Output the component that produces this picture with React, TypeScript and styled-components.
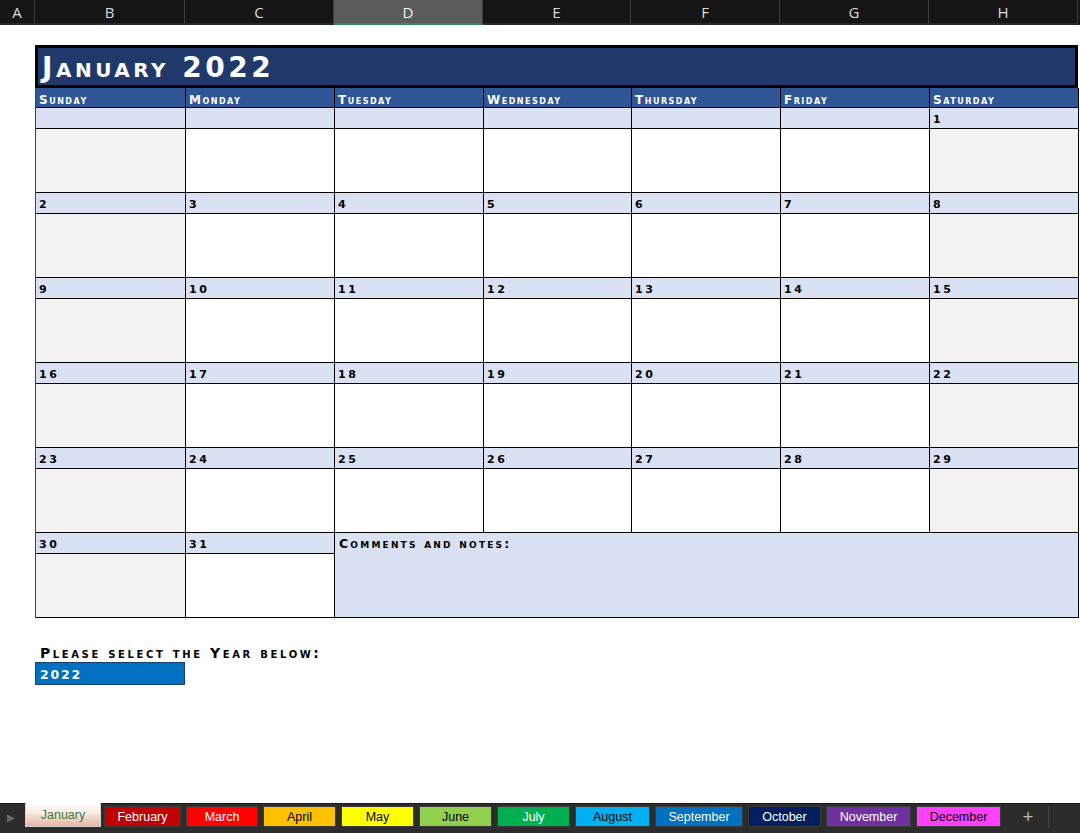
import React from "react";
import styled, { createGlobalStyle } from "styled-components";

const GlobalStyle = createGlobalStyle`
  html, body {
    margin: 0;
    padding: 0;
    background: #ffffff;
    font-family: "Liberation Sans", Arial, sans-serif;
  }
`;

const Page = styled.div`
  width: 1080px;
  height: 833px;
  display: flex;
  flex-direction: column;
  overflow: hidden;
  background: #ffffff;
`;

const ColumnBar = styled.div`
  height: 25px;
  display: flex;
  background: #151515;
  flex-shrink: 0;
`;

const ColumnHead = styled.div<{ $w: number; $active?: boolean }>`
  width: ${(p) => p.$w}px;
  flex-shrink: 0;
  box-sizing: border-box;
  display: flex;
  align-items: center;
  justify-content: center;
  color: ${(p) => (p.$active ? "#f0f0f0" : "#dcdcdc")};
  background: ${(p) => (p.$active ? "#5b5b5b" : "transparent")};
  border-right: 1px solid #3c3c3c;
  border-bottom: 2px solid ${(p) => (p.$active ? "#2e8b57" : "#2a2a2a")};
  font-family: "Open Sans", "Liberation Sans", sans-serif;
  font-size: 15px;
  font-weight: 400;
`;

const Sheet = styled.div`
  flex: 1;
  padding: 20px 0 0 35px;
`;

const Calendar = styled.div`
  width: 1043px;
`;

const TitleBox = styled.div`
  height: 43px;
  box-sizing: border-box;
  background: #21396a;
  border: 3px solid #000;
  color: #fff;
  display: flex;
  align-items: flex-end;
  padding: 0 0 3px 4px;
  font-family: "DejaVu Sans", sans-serif;
  font-weight: 700;
  font-size: 28px;
  font-variant: small-caps;
  letter-spacing: 3.5px;
  line-height: 1;
`;

const Grid = styled.div`
  display: grid;
  grid-template-columns: 150px 149px 149px 148px 149px 149px 149px;
  grid-template-rows: 20px repeat(6, 21px 64px);
  border-left: 1px solid #444;
`;

const smallCaps = `
  font-family: "DejaVu Sans", sans-serif;
  font-weight: 700;
  font-variant: small-caps;
`;

const DayHead = styled.div`
  box-sizing: border-box;
  background: #2f5597;
  border-right: 1px solid #000;
  border-bottom: 1px solid #000;
  color: #fff;
  ${smallCaps}
  font-size: 12px;
  letter-spacing: 1.5px;
  padding: 6px 0 0 3px;
  line-height: 1;
`;

const NumCell = styled.div`
  box-sizing: border-box;
  background: #d9e1f2;
  border-right: 1px solid #000;
  border-bottom: 1px solid #000;
  color: #000;
  ${smallCaps}
  font-size: 11px;
  letter-spacing: 2.5px;
  padding: 6px 0 0 3px;
  line-height: 1;
`;

const BodyCell = styled.div<{ $weekend: boolean }>`
  box-sizing: border-box;
  background: ${(p) => (p.$weekend ? "#f2f2f2" : "#ffffff")};
  border-right: 1px solid #000;
  border-bottom: 1px solid #000;
`;

const Comments = styled.div`
  grid-column: 3 / span 5;
  grid-row: span 2;
  box-sizing: border-box;
  background: #d9e1f2;
  border-right: 1px solid #000;
  border-bottom: 1px solid #000;
  color: #000;
  ${smallCaps}
  font-size: 12.5px;
  letter-spacing: 2.2px;
  padding: 5px 0 0 4px;
  line-height: 1;
`;

const YearLabel = styled.div`
  margin-top: 28px;
  padding-left: 5px;
  color: #000;
  ${smallCaps}
  font-size: 14px;
  letter-spacing: 2.6px;
  line-height: 1;
`;

const YearBox = styled.div`
  margin-top: 2px;
  width: 150px;
  height: 23px;
  box-sizing: border-box;
  background: #0070c0;
  border: 1px solid #1b3f6e;
  color: #fff;
  ${smallCaps}
  font-size: 12.5px;
  letter-spacing: 1.8px;
  padding: 6px 0 0 4px;
  line-height: 1;
`;

const TabBar = styled.div`
  height: 30px;
  flex-shrink: 0;
  background: #2c2c2c;
  border-top: 1px solid #1a1a1a;
  box-sizing: border-box;
  display: flex;
  align-items: flex-start;
  padding-top: 2px;
`;

const Arrow = styled.div`
  width: 22px;
  height: 22px;
  display: flex;
  align-items: center;
  justify-content: center;
  color: #6a6a6a;
  font-size: 10px;
  margin-right: 3px;
`;

const Tab = styled.div<{ $w: number; $bg: string; $fg: string }>`
  width: ${(p) => p.$w}px;
  height: 21px;
  box-sizing: border-box;
  margin-right: 5px;
  background: ${(p) => p.$bg};
  color: ${(p) => p.$fg};
  display: flex;
  align-items: center;
  justify-content: center;
  font-family: "Liberation Sans", Arial, sans-serif;
  font-size: 12.5px;
  border: 1px solid #3a3a3a;
`;

const ActiveTab = styled(Tab)`
  height: 24px;
  margin-top: -3px;
  margin-right: 3px;
  background: linear-gradient(#ffffff 0%, #f8ece6 40%, #e6b6a2 100%);
  border: 1px solid #d0d0d0;
  border-top: none;
`;

const AddTab = styled.div`
  width: 40px;
  height: 22px;
  margin-left: 2px;
  display: flex;
  align-items: center;
  justify-content: center;
  color: #bbb;
  font-size: 18px;
  border-right: 1px solid #444;
`;

const columns: [string, number][] = [
  ["A", 35],
  ["B", 150],
  ["C", 149],
  ["D", 149],
  ["E", 148],
  ["F", 149],
  ["G", 149],
  ["H", 149],
];

const days = ["Sunday", "Monday", "Tuesday", "Wednesday", "Thursday", "Friday", "Saturday"];

const weeks: (number | null)[][] = [
  [null, null, null, null, null, null, 1],
  [2, 3, 4, 5, 6, 7, 8],
  [9, 10, 11, 12, 13, 14, 15],
  [16, 17, 18, 19, 20, 21, 22],
  [23, 24, 25, 26, 27, 28, 29],
];

const tabs: [string, number, string, string][] = [
  ["February", 77, "#c00000", "#ffffff"],
  ["March", 72, "#ff0000", "#ffffff"],
  ["April", 73, "#ffc000", "#000000"],
  ["May", 73, "#ffff00", "#000000"],
  ["June", 73, "#92d050", "#000000"],
  ["July", 73, "#00b050", "#ffffff"],
  ["August", 75, "#00b0f0", "#000000"],
  ["September", 88, "#0070c0", "#ffffff"],
  ["October", 73, "#002060", "#ffffff"],
  ["November", 85, "#7030a0", "#ffffff"],
  ["December", 85, "#ff40ff", "#000000"],
];

export default function App() {
  return (
    <Page>
      <GlobalStyle />
      <ColumnBar>
        {columns.map(([name, w]) => (
          <ColumnHead key={name} $w={w} $active={name === "D"}>
            {name}
          </ColumnHead>
        ))}
      </ColumnBar>
      <Sheet>
        <Calendar>
          <TitleBox>January 2022</TitleBox>
          <Grid>
            {days.map((d) => (
              <DayHead key={d}>{d}</DayHead>
            ))}
            {weeks.map((week, wi) => (
              <React.Fragment key={wi}>
                {week.map((n, i) => (
                  <NumCell key={"n" + i}>{n ?? ""}</NumCell>
                ))}
                {week.map((_, i) => (
                  <BodyCell key={"b" + i} $weekend={i === 0 || i === 6} />
                ))}
              </React.Fragment>
            ))}
            <NumCell>30</NumCell>
            <NumCell>31</NumCell>
            <Comments>Comments and notes:</Comments>
            <BodyCell $weekend />
            <BodyCell $weekend={false} />
          </Grid>
        </Calendar>
        <YearLabel>Please select the Year below:</YearLabel>
        <YearBox>2022</YearBox>
      </Sheet>
      <TabBar>
        <Arrow>▶</Arrow>
        <ActiveTab $w={76} $bg="#fff" $fg="#3d7a3d">
          January
        </ActiveTab>
        {tabs.map(([name, w, bg, fg]) => (
          <Tab key={name} $w={w} $bg={bg} $fg={fg}>
            {name}
          </Tab>
        ))}
        <AddTab>+</AddTab>
      </TabBar>
    </Page>
  );
}
